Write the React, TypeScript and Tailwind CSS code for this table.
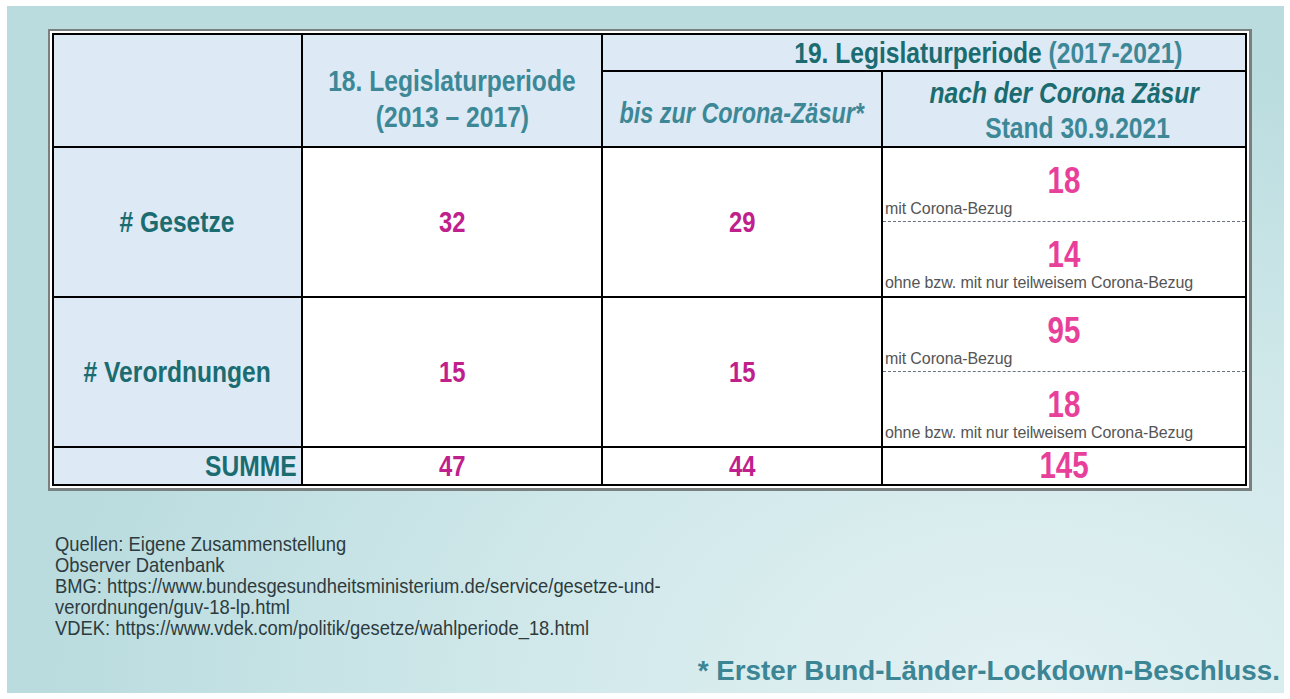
import React from 'react';

// Arial Narrow look: Liberation Sans squeezed horizontally
function N({ children, className = '', origin = 'origin-center', sx = 'scale-x-[0.82]' }: { children: React.ReactNode; className?: string; origin?: string; sx?: string }) {
  return <span className={`inline-block whitespace-nowrap ${sx} ${origin} ${className}`}>{children}</span>;
}

const cell = 'border-2 border-black p-0';
const head = 'bg-[#dde9f4]';

function Center({ children, className = '' }: { children: React.ReactNode; className?: string }) {
  return <div className={`flex flex-col items-center justify-center ${className}`}>{children}</div>;
}

function Part({ value, label, dashed }: { value: string; label: string; dashed?: boolean }) {
  return (
    <div className={`flex h-[74px] flex-col ${dashed ? 'border-b border-dashed border-gray-500' : ''}`}>
      <div className="flex h-[51px] justify-center pt-[15px]">
        <N className="text-[36px] font-bold leading-[36px] text-[#e8409a]">{value}</N>
      </div>
      <div className="pl-[2px] pt-[2px] text-[16px] leading-[16px] tracking-[-0.1px] text-[#555]">{label}</div>
    </div>
  );
}

function SplitCell({ top, bottom }: { top: [string, string]; bottom: [string, string] }) {
  return (
    <td className={`${cell} align-top`}>
      <div className="flex h-[148px] flex-col">
        <Part value={top[0]} label={top[1]} dashed />
        <Part value={bottom[0]} label={bottom[1]} />
      </div>
    </td>
  );
}

function Num({ v }: { v: string }) {
  return (
    <td className={cell}>
      <Center>
        <N className="text-[29px] font-bold leading-[32px] text-[#c0208c]">{v}</N>
      </Center>
    </td>
  );
}

const sources = [
  'Quellen: Eigene Zusammenstellung',
  'Observer Datenbank',
  'BMG: https://www.bundesgesundheitsministerium.de/service/gesetze-und-',
  'verordnungen/guv-18-lp.html',
  'VDEK: https://www.vdek.com/politik/gesetze/wahlperiode_18.html',
];

export default function App() {
  return (
    <div className="min-h-[699px] w-[1290px] bg-white pl-[7px] pt-[6px] font-['Liberation_Sans',Arial,sans-serif]">
      <div className="h-[687px] w-[1277px] bg-[radial-gradient(ellipse_90%_110%_at_80%_100%,#e3f1f3_0%,#d0e8ea_45%,#badcdf_85%)] pl-[41px] pt-[23px]">
        <div className="w-[1204px] border-2 border-r-[3px] border-b-[3px] border-[#7a7f80] bg-white p-[2px]">
          <table className="w-full table-fixed border-collapse">
            <colgroup>
              <col className="w-[249px]" />
              <col className="w-[300px]" />
              <col className="w-[280px]" />
              <col />
            </colgroup>
            <tbody>
              <tr className="h-[37px]">
                <td rowSpan={2} className={`${cell} ${head}`} />
                <td rowSpan={2} className={`${cell} ${head}`}>
                  <Center className="pt-[16px] text-[30px] font-bold leading-[36px] text-[#3d8897]">
                    <N>18. Legislaturperiode</N>
                    <N>(2013 – 2017)</N>
                  </Center>
                </td>
                <td colSpan={2} className={`${cell} ${head}`}>
                  <div className="flex justify-end pr-[62px] text-[30px] font-bold leading-[32px]">
                    <N origin="origin-right">
                      <span className="text-[#1b6c70]">19. Legislaturperiode </span>
                      <span className="text-[#3d8897]">(2017-2021)</span>
                    </N>
                  </div>
                </td>
              </tr>
              <tr className="h-[76px]">
                <td className={`${cell} ${head}`}>
                  <Center className="pt-[8px] text-[30px] font-bold italic leading-[34px] text-[#3d8897]">
                    <N sx="scale-x-[0.78]">bis zur Corona-Zäsur*</N>
                  </Center>
                </td>
                <td className={`${cell} ${head}`}>
                  <Center className="pt-[2px] text-[30px] font-bold leading-[35px]">
                    <N className="italic text-[#1b6c70]">nach der Corona Zäsur</N>
                    <div className="pl-[28px]">
                      <N className="text-[#3d8897]">Stand 30.9.2021</N>
                    </div>
                  </Center>
                </td>
              </tr>
              <tr className="h-[148px]">
                <td className={`${cell} ${head}`}>
                  <Center className="text-[30px] font-bold leading-[34px] text-[#1b6c70]">
                    <N># Gesetze</N>
                  </Center>
                </td>
                <Num v="32" />
                <Num v="29" />
                <SplitCell top={['18', 'mit Corona-Bezug']} bottom={['14', 'ohne bzw. mit nur teilweisem Corona-Bezug']} />
              </tr>
              <tr className="h-[149px]">
                <td className={`${cell} ${head}`}>
                  <Center className="text-[30px] font-bold leading-[34px] text-[#1b6c70]">
                    <N># Verordnungen</N>
                  </Center>
                </td>
                <Num v="15" />
                <Num v="15" />
                <SplitCell top={['95', 'mit Corona-Bezug']} bottom={['18', 'ohne bzw. mit nur teilweisem Corona-Bezug']} />
              </tr>
              <tr className="h-[38px]">
                <td className={`${cell} ${head}`}>
                  <div className="flex justify-end pr-[4px] text-[30px] font-bold leading-[34px] text-[#1b6c70]">
                    <N origin="origin-right">SUMME</N>
                  </div>
                </td>
                <Num v="47" />
                <Num v="44" />
                <td className={cell}>
                  <Center>
                    <N className="text-[36px] font-bold leading-[34px] text-[#e8409a]">145</N>
                  </Center>
                </td>
              </tr>
            </tbody>
          </table>
        </div>

        <div className="mt-[42px] flex flex-col items-start pl-[7px] text-[21px] leading-[21px] text-[#2e3b3e]">
          {sources.map((s) => (
            <N key={s} origin="origin-left" sx="scale-x-[0.875]">{s}</N>
          ))}
        </div>

        <div className="mt-[17px] pr-[4px] text-right text-[27.8px] font-bold leading-[32px] text-[#3b8595]">
          * Erster Bund-Länder-Lockdown-Beschluss.
        </div>
      </div>
    </div>
  );
}
